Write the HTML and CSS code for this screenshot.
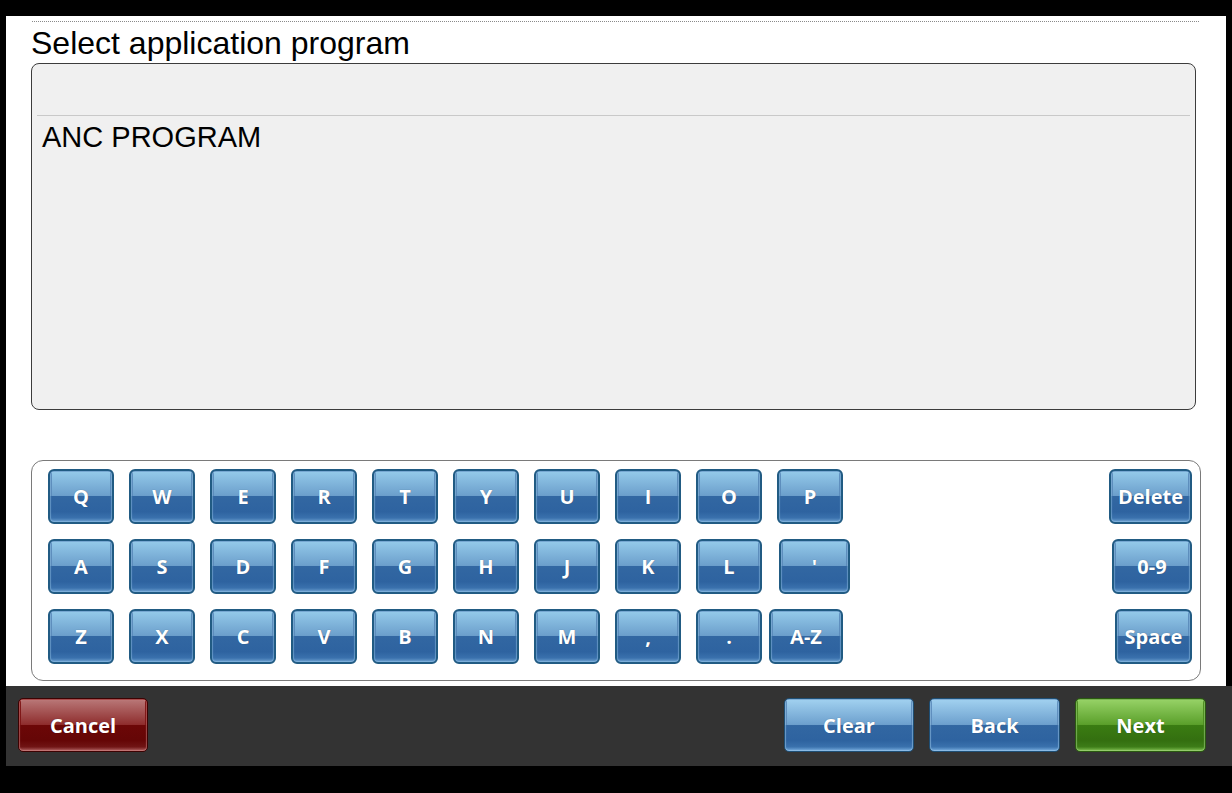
FILE: index.html
```html
<!DOCTYPE html>
<html>
<head>
<meta charset="utf-8">
<link rel="stylesheet" href="styles.css">
</head>
<body>
<div class="screen">
  <div class="main">
    <div class="rule"></div>
    <h1 class="title">Select application program</h1>
    <div class="list">
      <div class="list-head"></div>
      <div class="list-item">ANC PROGRAM</div>
    </div>
    <div class="keyboard">
      <div class="krow">
        <button class="key">Q</button>
        <button class="key">W</button>
        <button class="key">E</button>
        <button class="key">R</button>
        <button class="key">T</button>
        <button class="key">Y</button>
        <button class="key">U</button>
        <button class="key">I</button>
        <button class="key">O</button>
        <button class="key">P</button>
        <button class="key key-side key-delete">Delete</button>
      </div>
      <div class="krow">
        <button class="key">A</button>
        <button class="key">S</button>
        <button class="key">D</button>
        <button class="key">F</button>
        <button class="key">G</button>
        <button class="key">H</button>
        <button class="key">J</button>
        <button class="key">K</button>
        <button class="key">L</button>
        <button class="key key-apos">'</button>
        <button class="key key-side key-num">0-9</button>
      </div>
      <div class="krow">
        <button class="key">Z</button>
        <button class="key">X</button>
        <button class="key">C</button>
        <button class="key">V</button>
        <button class="key">B</button>
        <button class="key">N</button>
        <button class="key">M</button>
        <button class="key">,</button>
        <button class="key">.</button>
        <button class="key key-az">A-Z</button>
        <button class="key key-side key-space">Space</button>
      </div>
    </div>
  </div>
  <div class="bar">
    <button class="btn btn-red">Cancel</button>
    <div class="bar-right">
      <button class="btn btn-blue">Clear</button>
      <button class="btn btn-blue btn-w">Back</button>
      <button class="btn btn-green btn-w">Next</button>
    </div>
  </div>
</div>
</body>
</html>
```

FILE: styles.css
```css
html, body {
  margin: 0;
  padding: 0;
  background: #000;
}
body {
  width: 1232px;
  height: 793px;
  overflow: hidden;
  font-family: "Liberation Sans", Arial, sans-serif;
}
.screen {
  padding: 16px 0 0 6px;
}
.main {
  width: 1220px;
  height: 670px;
  box-sizing: border-box;
  background: #fff;
  padding-top: 5px;
}
.rule {
  margin: 0 27px 0 26px;
  height: 0;
  border-top: 1px dotted #8a8a8a;
}
.title {
  margin: 2px 0 0 25px;
  font-family: "Liberation Sans", Arial, sans-serif;
  font-weight: normal;
  font-size: 32px;
  line-height: 38px;
  color: #000;
}
.list {
  margin: 1px 0 0 25px;
  width: 1165px;
  height: 347px;
  box-sizing: border-box;
  border: 1px solid #3c3c3c;
  border-radius: 8px;
  background: #f0f0f0;
  padding: 0 5px;
}
.list-head {
  height: 51px;
  border-bottom: 1px solid #c9c9c9;
}
.list-item {
  padding: 4px 5px;
  font-size: 29px;
  line-height: 34px;
  color: #000;
}
.keyboard {
  margin: 50px 0 0 25px;
  width: 1170px;
  height: 221px;
  box-sizing: border-box;
  border: 1px solid #7a7a7a;
  border-radius: 12px;
  background: #fff;
  padding: 8px 8px 0 16px;
  display: flex;
  flex-direction: column;
  gap: 15px;
}
.krow {
  display: flex;
  gap: 15px;
  height: 55px;
}
.key, .btn {
  margin: 0;
  padding: 0;
  font-family: "Open Sans", "DejaVu Sans", sans-serif;
  font-weight: 700;
  color: #fff;
  text-shadow: 0 0 1px rgba(0, 0, 0, 0.35);
  box-sizing: border-box;
  cursor: pointer;
}
.key {
  width: 66px;
  height: 55px;
  font-size: 20px;
  line-height: 51px;
  padding-top: 0;
  border: 2px solid #215b83;
  border-radius: 6px;
  background:
    linear-gradient(#93c9e9, #6b9ecb) 2px 1px / calc(100% - 4px) 47% no-repeat,
    linear-gradient(#5d8fbf, #5888b9 48%, #3267a2 50%, #2e63a0 80%, #3a71ad 92%, #6c9fd0 100%);
  box-shadow: inset 0 0 1px 1px rgba(160, 205, 238, 0.45);
}
.key-apos {
  width: 71px;
  margin-left: 2px;
}
.key-az {
  width: 74px;
  margin-left: -8px;
}
.key-side {
  margin-left: auto;
}
.key-delete { width: 83px; }
.key-num { width: 80px; }
.key-space { width: 77px; }

.bar {
  width: 1226px;
  height: 80px;
  box-sizing: border-box;
  background: #333;
  padding: 12px 26px 0 12px;
  display: flex;
  align-items: flex-start;
  justify-content: space-between;
}
.bar-right {
  display: flex;
  gap: 15px;
}
.btn {
  width: 130px;
  height: 54px;
  font-size: 20px;
  line-height: 51px;
  padding-top: 0;
  border-radius: 5px;
  border: 1px solid #1d4f77;
}
.btn-w { width: 131px; }
.btn-blue {
  border-color: #1f4f75;
  background:
    linear-gradient(#a0d0ef, #6c9fcd) 2px 1px / calc(100% - 4px) 48% no-repeat,
    linear-gradient(#5f90bf, #5a8aba 49%, #3267a2 51%, #2e63a0 80%, #3a71ad 92%, #78aee0 100%);
  box-shadow: inset 0 0 1px 1px rgba(170, 212, 242, 0.5);
}
.btn-red {
  border-color: #3c0202;
  background:
    linear-gradient(#b87676, #8e2c2c) 2px 1px / calc(100% - 4px) 48% no-repeat,
    linear-gradient(#7e1414, #7a1010 49%, #6c0707 51%, #650606 80%, #701414 92%, #b06060 100%);
  box-shadow: inset 0 0 1px 1px rgba(230, 160, 160, 0.45);
}
.btn-green {
  border-color: #2a5a10;
  background:
    linear-gradient(#95d165, #5a9f2a) 2px 1px / calc(100% - 4px) 48% no-repeat,
    linear-gradient(#4c8d1e, #488a1c 49%, #3a7c12 51%, #346f10 80%, #3d7c18 92%, #80c050 100%);
  box-shadow: inset 0 0 1px 1px rgba(180, 230, 150, 0.5);
}
```
